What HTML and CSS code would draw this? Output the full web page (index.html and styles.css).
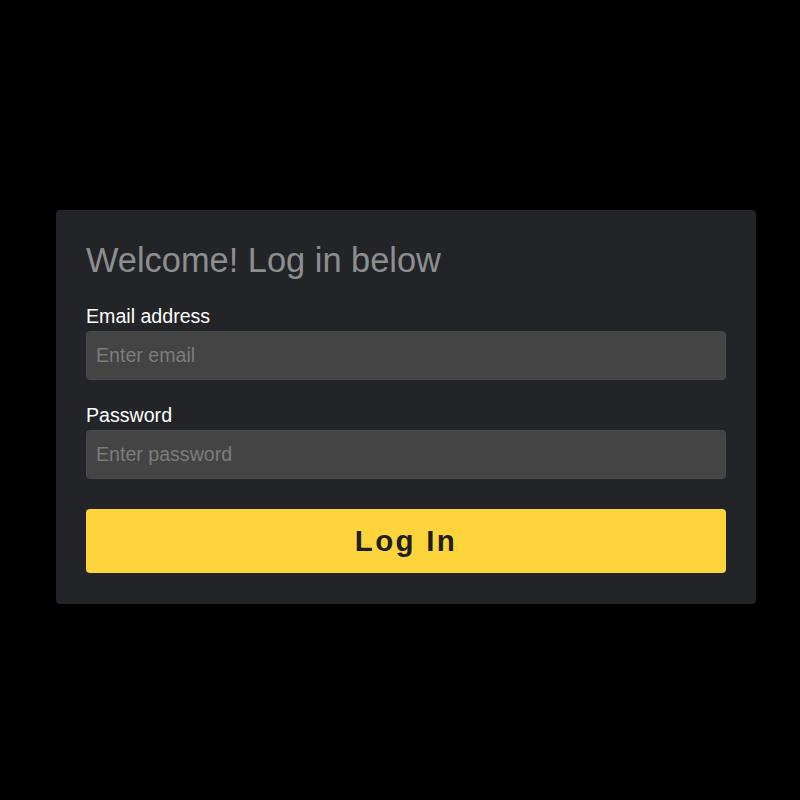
FILE: index.html
```html
<!DOCTYPE html>
<html>
<head>
<meta charset="utf-8">
<link rel="stylesheet" href="styles.css">
</head>
<body>
<div class="page">
  <form class="card">
    <h1 class="title">Welcome! Log in below</h1>
    <label class="label" for="email">Email address</label>
    <input class="input" id="email" type="email" placeholder="Enter email">
    <label class="label label-pw" for="pw">Password</label>
    <input class="input" id="pw" type="password" placeholder="Enter password">
    <button class="btn" type="button">Log In</button>
  </form>
</div>
</body>
</html>
```
FILE: styles.css
```css
html, body {
  margin: 0;
  padding: 0;
  background: #000;
  font-family: "Liberation Sans", Arial, sans-serif;
}
.page {
  width: 800px;
  height: 800px;
  display: flex;
  align-items: flex-start;
  justify-content: center;
  padding-top: 210px;
  box-sizing: border-box;
}
.card {
  width: 700px;
  margin-left: 12px;
  box-sizing: border-box;
  background: #222428;
  border-radius: 4px;
  padding: 27px 30px 31px 30px;
  display: flex;
  flex-direction: column;
}
.title {
  margin: 0 0 22px 0;
  font-weight: normal;
  font-size: 34.4px;
  line-height: 46px;
  color: #8d8e90;
}
.label {
  color: #fff;
  font-size: 19.6px;
  line-height: 22px;
  margin-bottom: 4px;
}
.label-pw {
  margin-top: 24px;
}
.input {
  height: 49px;
  box-sizing: border-box;
  border: 1px solid #4a4a4a;
  border-radius: 4px;
  background: #444444;
  padding: 0 9px;
  font-family: inherit;
  font-size: 19.6px;
  color: #ddd;
  outline: none;
}
.input::placeholder {
  color: #7c7c7c;
}
.btn {
  margin-top: 30px;
  height: 64px;
  border: none;
  border-radius: 4px;
  background: #fdd43b;
  color: #1e1e1e;
  font-family: inherit;
  font-weight: bold;
  font-size: 29.5px;
  letter-spacing: 2.3px;
}
```
